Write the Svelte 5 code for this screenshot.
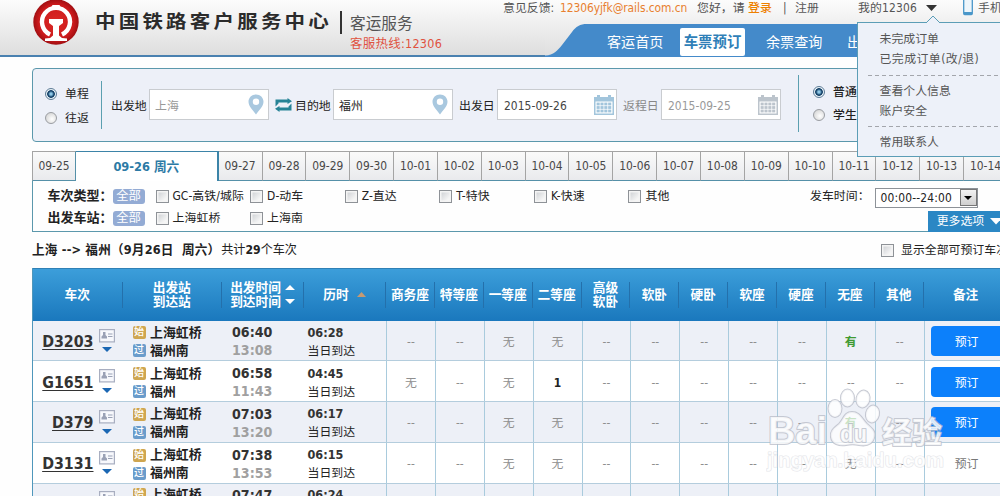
<script>
  const dates = ['09-27', '09-28', '09-29', '09-30', '10-01', '10-02', '10-03', '10-04', '10-05', '10-06', '10-07', '10-08', '10-09', '10-10', '10-11', '10-12', '10-13', '10-14'];
  const types = ['GC-高铁/城际', 'D-动车', 'Z-直达', 'T-特快', 'K-快速', '其他'];
  const stations = ['上海虹桥', '上海南'];
  const seats = ['商务座', '特等座', '一等座', '二等座', '高级软卧', '软卧', '硬卧', '软座', '硬座', '无座', '其他'];
  const fill = (o) => seats.map((_, i) => o[i] ?? '--');
  const trains = [
    { no: 'D3203', to: '福州南', dep: '06:40', arr: '13:08', dur: '06:28', cells: fill({ 2: '无', 3: '无', 9: '有' }), book: true },
    { no: 'G1651', to: '福州', dep: '06:58', arr: '11:43', dur: '04:45', cells: fill({ 0: '无', 2: '无', 3: '1' }), book: true },
    { no: 'D379', to: '福州南', dep: '07:03', arr: '13:20', dur: '06:17', cells: fill({ 2: '无', 3: '无', 9: '有' }), book: true },
    { no: 'D3131', to: '福州南', dep: '07:38', arr: '13:53', dur: '06:15', cells: fill({ 2: '无', 3: '无', 9: '无' }), book: false }
  ];
  const next = { dep: '07:47', dur: '06:24' };
</script>

{#snippet pin()}
  <svg class="pin" width="16" height="21" viewBox="0 0 16 21"><path d="M8 .5C3.700.5.5 3.700.5 7.800c0 4.400 4 8 7.500 12.700 3.500-4.700 7.500-8.300 7.500-12.700C15.500 3.700 12.300.5 8 .5z" fill="#a9c8df" /><circle cx="8" cy="7.800" r="3.200" fill="#fff" /></svg>
{/snippet}

{#snippet calendar(color)}
  <svg class="cal" width="20" height="20" viewBox="0 0 20 20">
    <path d="M0 2h3V0h3v2h8V0h3v2h3v18H0z" fill={color} />
    <path d="M1.500 6.500h17v12h-17z" fill="#fff" />
    {#each [0, 1, 2] as r}
      {#each [0, 1, 2, 3] as c}
        <rect x={2.600 + c * 3.850} y={7.600 + r * 3.500} width="3.100" height="2.800" fill={color} />
      {/each}
    {/each}
  </svg>
{/snippet}

{#snippet card()}
  <svg width="16" height="14" viewBox="0 0 16 14"><rect x=".6" y=".6" width="14.800" height="12.300" fill="#f7f8fc" stroke="#a8aec0" stroke-width="1.200" /><path d="M4 3h2.500v3L8 7.500V9.500H2.500V7.500L4 6zM9 4.500h4.500v1H9zM9 7h4.500v1H9z" fill="#9aa1b5" /></svg>
{/snippet}

<div class="page">
  <header>
    <svg class="logo" width="46" height="46" viewBox="0 0 46 46">
      <defs><radialGradient id="red" cx=".5" cy=".5" r=".55"><stop offset="0" stop-color="#dc2a26" /><stop offset=".7" stop-color="#cb1a1c" /><stop offset="1" stop-color="#8e0a0e" /></radialGradient></defs>
      <circle cx="23" cy="23" r="22.700" fill="url(#red)" />
      <path d="M17 35.500A14 14 0 1 1 29 35.500" fill="none" stroke="#fff" stroke-width="4.400" />
      <path d="M17.500 9.500L19.500 6h7l2 3.500z" fill="#fff" />
      <path d="M16 20h14v4l-4 3v9.500l3 2.500 5 .6V42H12v-2.400l5-.6 3-2.500V27l-4-3z" fill="#fff" />
    </svg>
    <h1>中国铁路客户服务中心</h1>
    <div class="bar"></div>
    <div class="sub"><span class="s1">客运服务</span><span class="s2">客服热线:12306</span></div>
    <div class="right">
      <div class="util">
        <span>意见反馈:</span><span class="mail">12306yjfk@rails.com.cn</span><span class="hello">您好，请</span><span class="login">登录</span><span class="pipe">|</span><span class="reg">注册</span><span class="mine">我的12306</span>
        <svg class="caret" width="11" height="6" viewBox="0 0 11 6"><path d="M0 0h11L5.500 6z" fill="#333" /></svg>
        <svg class="phone" width="10" height="17" viewBox="0 0 10 17"><rect x=".7" y="-3" width="8.600" height="17.500" rx="1" fill="#eef6fb" stroke="#4a97c9" stroke-width="1.300" /><path d="M1 12h8v2.500H1z" fill="#4a97c9" /></svg>
        <span>手机</span>
      </div>
      <nav>
        <svg class="curve" width="47" height="33" viewBox="0 0 47 33"><path d="M0 33V31.500C9 31 12 27 17 21L27 8C31 2.500 35 0 42 0h5v33z" fill="#448aca" /></svg>
        <span class="home">客运首页</span><span class="active">车票预订</span><span class="query">余票查询</span><span class="out">出</span>
      </nav>
    </div>
  </header>

  <section class="search">
    <div class="radios">
      <label><i class="radio on"></i>单程</label>
      <label><i class="radio"></i>往返</label>
    </div>
    <div class="rule"></div>
    <span class="lab">出发地</span>
    <div class="field"><span class="ph">上海</span>{@render pin()}</div>
    <svg class="swap" width="17" height="14" viewBox="0 0 17 14"><path d="M.5 8.500V1.500h12V0L17 3.200 12.500 6V4.500h-9v1zM16.500 5.500v7h-12V14L0 10.800 4.500 8v1.500h9v-1z" fill="#278396" /></svg>
    <span class="lab l2">目的地</span>
    <div class="field"><span class="dark">福州</span>{@render pin()}</div>
    <span class="lab l3">出发日</span>
    <div class="field"><span class="date">2015-09-26</span>{@render calendar('#a2c5dc')}</div>
    <span class="lab l4">返程日</span>
    <div class="field"><span class="ph date">2015-09-25</span>{@render calendar('#bcc4cc')}</div>
    <div class="rule r2"></div>
    <div class="radios kinds">
      <label><i class="radio on"></i>普通</label>
      <label><i class="radio"></i>学生</label>
    </div>
  </section>

  <div class="tabs">
    <span class="tab first">09-25</span>
    <span class="tab current">09-26 周六</span>
    {#each dates as d}<span class="tab">{d}</span>{/each}
  </div>

  <section class="filters">
    <div class="frow">
      <b>车次类型：</b><em>全部</em>
      {#each types as t}<label class="opt"><i class="check"></i>{t}</label>{/each}
      <span class="when">发车时间：</span>
      <div class="select"><span>00:00--24:00</span><i><svg width="8" height="4" viewBox="0 0 8 4"><path d="M0 0h8L4 4z" /></svg></i></div>
    </div>
    <div class="frow second">
      <b>出发车站：</b><em>全部</em>
      {#each stations as t}<label class="opt"><i class="check"></i>{t}</label>{/each}
      <div class="more">更多选项<svg width="12" height="7" viewBox="0 0 12 7"><path d="M0 0h12L6 6.500z" fill="#fff" /></svg></div>
    </div>
  </section>

  <div class="summary">
    <div><b class="route">上海 --&gt; 福州（9月26日&nbsp; 周六）</b>共计<b>29</b>个车次</div>
    <label><i class="check"></i>显示全部可预订车次</label>
  </div>

  <div class="table">
    <div class="thead">
      <div>车次</div>
      <div>出发站<br />到达站</div>
      <div class="times"><span>出发时间<br />到达时间</span><svg width="10" height="19" viewBox="0 0 10 19"><path d="M0 5h10L5 0zM0 14h10l-5 5z" fill="#fff" /></svg></div>
      <div class="times"><span>历时</span><svg class="up" width="9" height="5" viewBox="0 0 9 5"><path d="M0 5h9L4.500 0z" fill="#c69a72" /></svg></div>
      {#each seats as s}<div>{#if s.length === 4}{s.slice(0, 2)}<br />{s.slice(2)}{:else}{s}{/if}</div>{/each}
      <div>备注</div>
    </div>
    {#each trains as t, i}
      <div class="row" class:odd={i % 2 === 0}>
        <div class="train">
          <a>{t.no}</a>
          <span class="ic">
            {@render card()}
            <svg width="10" height="5" viewBox="0 0 10 5"><path d="M0 0h10L5 5z" fill="#1b67b3" /></svg>
          </span>
        </div>
        <div class="st">
          <span><i class="tag">始</i>上海虹桥</span>
          <span><i class="tag pass">过</i>{t.to}</span>
        </div>
        <div class="tm"><b>{t.dep}</b><b class="arr">{t.arr}</b></div>
        <div class="du"><b>{t.dur}</b><span>当日到达</span></div>
        {#each t.cells as c}<div class="cell" class:yes={c === '有'} class:num={c === '1'}>{c}</div>{/each}
        <div class="cell book">{#if t.book}<span class="btn">预订</span>{:else}<span class="off">预订</span>{/if}</div>
      </div>
    {/each}
    <div class="row odd last">
      <div class="train"><span class="ic">{@render card()}</span></div>
      <div class="st"><span><i class="tag">始</i>上海虹桥</span></div>
      <div class="tm"><b>{next.dep}</b></div>
      <div class="du"><b>{next.dur}</b></div>
      {#each seats as _}<div class="cell"></div>{/each}
      <div class="cell book"></div>
    </div>
  </div>

  <div class="menu">
    <svg class="tip" width="14" height="8" viewBox="0 0 14 8"><path d="M0 8L7 1l7 7" fill="#edf1f9" stroke="#5b9db6" /></svg>
    <span>未完成订单</span><span class="wide">已完成订单(改/退)</span>
    <hr />
    <span>查看个人信息</span><span>账户安全</span>
    <hr />
    <span>常用联系人</span>
  </div>

  <svg class="mark" width="184" height="90" viewBox="0 0 184 90">
    <g fill="#fff" fill-opacity=".82" stroke="#b9bdc8" stroke-opacity=".8" stroke-width="2" stroke-linejoin="round" paint-order="stroke">
      <ellipse cx="69" cy="22.500" rx="6.500" ry="8.500" />
      <ellipse cx="81.500" cy="12" rx="6.500" ry="8.500" />
      <ellipse cx="97" cy="13" rx="6.500" ry="8.500" transform="rotate(12 97 13)" />
      <ellipse cx="106.500" cy="28" rx="6.500" ry="8.500" transform="rotate(12 106.500 28)" />
      <path d="M86 26c8 0 10 7 15 12 6 5 9 8 7 14-2 7-9 8-15 7-5-1-8-1-13 0-7 1-14-1-15-8-1-6 3-9 8-13 5-5 5-12 13-12z" fill-opacity=".72" />
      <text x="2" y="58" font-size="39" font-weight="700" textLength="59" lengthAdjust="spacingAndGlyphs">Bai</text>
      <text x="74" y="56" font-size="23" font-weight="700" textLength="27" lengthAdjust="spacingAndGlyphs">du</text>
      <text x="116" y="57" font-size="30" font-weight="700" textLength="60">经验</text>
      <text x="1" y="81" font-size="20" font-weight="700" stroke-opacity=".4" stroke-width="1.200" textLength="177" lengthAdjust="spacingAndGlyphs">jingyan.baidu.com</text>
    </g>
  </svg>
</div>

<style>
  :global(body) { background: #fff; overflow: hidden; }
  .page { position: relative; width: 1000px; height: 496px; overflow: hidden; background: #fefefe; font: 11.9px/16px "DejaVu Sans Condensed", "Noto Sans CJK SC", sans-serif; color: #333; white-space: nowrap; }
  .page * { box-sizing: border-box; }
  i, em { font-style: normal; }
  header { display: flex; height: 57px; background: linear-gradient(#fcfcfc, #dedede); border-bottom: 2px solid #4a81b0; width: 1060px; }
  .logo { margin: -1px 0 0 33px; flex: none; }
  h1 { margin: 10px 0 0 16px; width: 242px; height: 24px; flex: none; font-size: 20.500px; line-height: 24px; font-weight: 700; letter-spacing: 3.200px; color: #2b2b2b; transform: scaleY(.86); }
  .bar { width: 2px; height: 23px; margin: 11px 0 0 3px; background: #333; flex: none; }
  .sub { display: flex; flex-direction: column; width: 153px; margin-left: 8px; flex: none; padding-top: 13px; }
  .s1 { font-size: 15.700px; line-height: 22px; color: #555; }
  .s2 { line-height: 17px; color: #e0523f; letter-spacing: .25px; font-size: 12.500px; }
  .right { flex: none; width: 560px; }
  .util { display: flex; height: 24px; line-height: 16px; color: #555; }
  .util span { flex: none; }
  .util span:first-child { width: 57px; }
  .mail { width: 137px; color: #e8802f; letter-spacing: -.07px; }
  .hello { width: 51px; }
  .login { width: 35px; color: #ee8000; font-weight: 500; }
  .pipe { width: 12px; }
  .reg { width: 63px; }
  .mine { width: 68px; letter-spacing: .15px; }
  .caret { margin: 5px 0 0; }
  .phone { margin: 0 5px 0 26px; }
  nav { display: flex; height: 33px; margin-left: 42px; background: #448aca; color: #fff; font-size: 14.100px; line-height: 36px; }
  .curve { background: linear-gradient(#efefef, #dedede); flex: none; height: 33px; }
  nav span { flex: none; }
  .home { width: 73px; margin-left: 15px; }
  .active { width: 65px; height: 28px; margin-top: 4px; background: #fff; color: #2f7fb8; font-weight: 700; line-height: 28px; text-align: center; border-radius: 2px; font-size: 14.400px; }
  .query { margin-left: 21px; width: 81px; }

  .search { display: flex; align-items: center; width: 1010px; height: 73.500px; margin: 11px 0 0 32px; background: #edf0f8; border: 1.500px solid #5b98ac; border-radius: 4px; }
  .radios { width: 68px; padding: 2px 0 0 12px; flex: none; }
  .radios label { display: flex; align-items: center; height: 24px; color: #222; }
  .radio { width: 12px; height: 12px; margin-right: 8px; border-radius: 50%; border: 1px solid #9a9da2; background: radial-gradient(circle at 60% 60%, #fff, #ccc); flex: none; }
  .radio.on { border-color: #5f7d97; background: radial-gradient(circle, #8fc9e8 0 1px, #123f66 3px, #19456b 3.500px, #e8f1f6 4.200px); }
  .rule { width: 1px; height: 48px; background: #5b9fb0; flex: none; }
  .lab { width: 36px; margin: 2px 2px 0 9px; flex: none; color: #222; }
  .l2 { margin-left: 2px; }
  .l3 { margin-left: 6px; }
  .l4 { margin-left: 6px; color: #888; }
  .field { display: flex; align-items: center; justify-content: space-between; width: 120px; height: 31px; padding: 0 4px 0 5px; background: #fff; border: 1.500px solid #c9ccd0; flex: none; color: #444; }
  .field span { padding-top: 2px; }
  .field .date { padding-left: 1px; letter-spacing: .06px; }
  .ph { color: #999; }
  .dark { color: #222; }
  .cal { margin-right: -2px; }
  .swap { margin: 0 1px 0 6px; flex: none; width: 17px; }
  .r2 { height: 57px; margin: -3px 0 0 17px; }
  .kinds { padding-left: 14px; margin-top: -3px; padding-top: 0; }
  .kinds label { height: 23px; font-weight: 500; }

  .tabs { display: flex; width: 1050px; height: 29.500px; margin: 9.500px 0 0 32px; }
  .tab { width: 43.850px; flex: none; border: 1px solid #a4a4a4; border-left-width: 0; border-bottom: 1px solid #5590a8; background: linear-gradient(#fafafa, #e9eaed); text-align: center; line-height: 29px; color: #484848; }
  .tab.first { width: 44px; border-left-width: 1px; border-right-color: #5590a8; }
  .tab.current { width: 142.700px; background: #fff; border-bottom: 0; border-top: 1.500px solid #3c84a8; border-right: 2px solid #3c84a8; color: #2c7aa5; font-weight: 700; font-size: 12.700px; }

  .filters { width: 1010px; height: 51px; margin-left: 32px; border: solid #5b98ac; border-width: 0 0 1.500px 1.500px; padding-top: 5px; }
  .frow { display: flex; height: 21px; align-items: center; padding-left: 14.500px; color: #222; }
  .frow b { width: 65px; font-size: 13px; flex: none; }
  em { width: 32px; height: 15px; margin-right: 11px; border-radius: 3px; background: #93abd4; color: #fff; line-height: 15px; font-size: 12.300px; text-align: center; flex: none; }
  .opt { display: flex; align-items: center; width: 94.600px; flex: none; letter-spacing: .08px; }
  .check { width: 13px; height: 13px; margin-right: 4px; border: 1px solid #8e9297; background: linear-gradient(135deg, #c9ccd0, #f6f6f6 75%); box-shadow: inset 0 0 0 1.500px #f4f4f4; flex: none; }
  .when { margin-left: 87px; width: 65px; flex: none; }
  .select { display: flex; align-items: center; justify-content: space-between; width: 102.500px; height: 20px; padding-left: 4.500px; border: 1px solid #8d9298; background: #fff; flex: none; margin-top: 3px; }
  .select span { letter-spacing: .18px; }
  .select i { display: flex; align-items: center; justify-content: center; width: 17px; height: 17px; border: 1px solid #777; background: linear-gradient(#f2f2f2, #cfcfcf); }
  .second { height: 23px; }
  .more { display: flex; align-items: center; gap: 6px; width: 90px; height: 21px; margin: 6px 0 0 583px; padding-left: 9px; background: #2b87c4; color: #fff; flex: none; }

  .summary { display: flex; justify-content: space-between; align-items: center; height: 36px; width: 1010px; margin-left: 32px; padding-top: 1px; color: #222; }
  .summary div { font-size: 12.100px; }
  .route { font-size: 12.600px; letter-spacing: .2px; margin-right: 1px; }
  .summary label { display: flex; align-items: center; width: 161px; }
  .summary .check { margin-right: 7px; }

  .table { margin-left: 32px; width: 980px; border-left: 1px solid #4f97bb; }
  .thead, .row { display: grid; grid-template-columns: 89.500px 99.500px 82px 82px repeat(11, 48.880px) 84px; }
  .thead { height: 53px; background: linear-gradient(#3c9eda, #1a78bd); border-top: 1px solid #2f80b5; color: #fff; font-weight: 700; font-size: 12.700px; line-height: 14px; align-items: center; text-align: center; }
  .thead > div { display: flex; align-items: center; justify-content: center; height: 26px; border-right: 1px solid #2470ab; }
  .thead > div:last-child { border: 0; }
  .times svg { margin-left: 4px; }
  .thead .up { margin-left: 8px; }
  .row { height: 40.750px; border-bottom: 1.500px solid #b4cddd; background: #fff; }
  .odd { background: #edf0f7; }
  .train { display: flex; justify-content: flex-end; align-items: center; padding-right: 8px; }
  .train a { font-size: 15.800px; font-weight: 700; color: #333; text-decoration: underline; text-underline-offset: 2px; text-decoration-thickness: 1.200px; margin: 3px 5px 0 0; }
  .ic { display: flex; flex-direction: column; align-items: center; gap: 4.500px; margin-top: 0; }
  .ic svg { display: block; }
  .st { display: flex; flex-direction: column; justify-content: center; padding: 3px 0 0 10px; font-weight: 700; font-size: 12.900px; line-height: 18px; color: #222; }
  .st > span { display: flex; align-items: center; gap: 4.500px; }
  .tag { width: 13px; height: 13px; border-radius: 2px; background: #cfa650; color: #fff; font-size: 10px; line-height: 12px; font-weight: 500; text-align: center; }
  .pass { background: #6a9ccb; }
  .tm, .du { display: flex; flex-direction: column; justify-content: center; line-height: 18px; padding-top: 2px; color: #333; }
  .tm { font-size: 14.100px; padding-left: 10px; }
  .arr { color: #a0a0a0; }
  .du { padding: 3px 0 0 3.500px; color: #222; }
  .du b { font-size: 12.500px; color: #333; }
  .cell { display: flex; align-items: center; justify-content: center; border-left: 1px solid #a9cbdd; color: #8f8f8f; padding-top: 3px; }
  .yes { color: #3f9a32; font-weight: 700; }
  .num { color: #222; font-weight: 700; }
  .book { justify-content: flex-start; padding: 1px 0 0 6px; color: #777; }
  .btn { display: block; width: 80px; height: 30px; padding-left: 24px; border-radius: 4px; background: #0c80fb; color: #fff; line-height: 33px; }
  .off { padding: 2px 0 0 24px; }
  .last { height: 14px; border-bottom: 0; overflow: hidden; }
  .last > div { justify-content: flex-start; }
  .last .train { justify-content: flex-end; align-items: flex-start; padding-top: 7px; }
  .last .st, .last .tm, .last .du { padding-top: 2px; }

  .menu { position: absolute; left: 856.500px; top: 22px; width: 160px; height: 135px; padding: 6px 0 0 22px; background: #edf1f9; border: 1.500px solid #5b9db6; display: flex; flex-direction: column; line-height: 20px; color: #555; }
  .wide { letter-spacing: .45px; }
  .tip { position: absolute; left: 68px; top: -8px; }
  .menu hr { width: 150px; height: 1px; margin: 5.500px 0 5px -12px; border: 0; background: repeating-linear-gradient(90deg, #a3a6ac 0 4px, transparent 4px 7px); flex: none; }
  .mark { position: absolute; left: 766px; top: 386px; font-family: "Liberation Sans", "Noto Sans CJK SC", sans-serif; }
</style>
